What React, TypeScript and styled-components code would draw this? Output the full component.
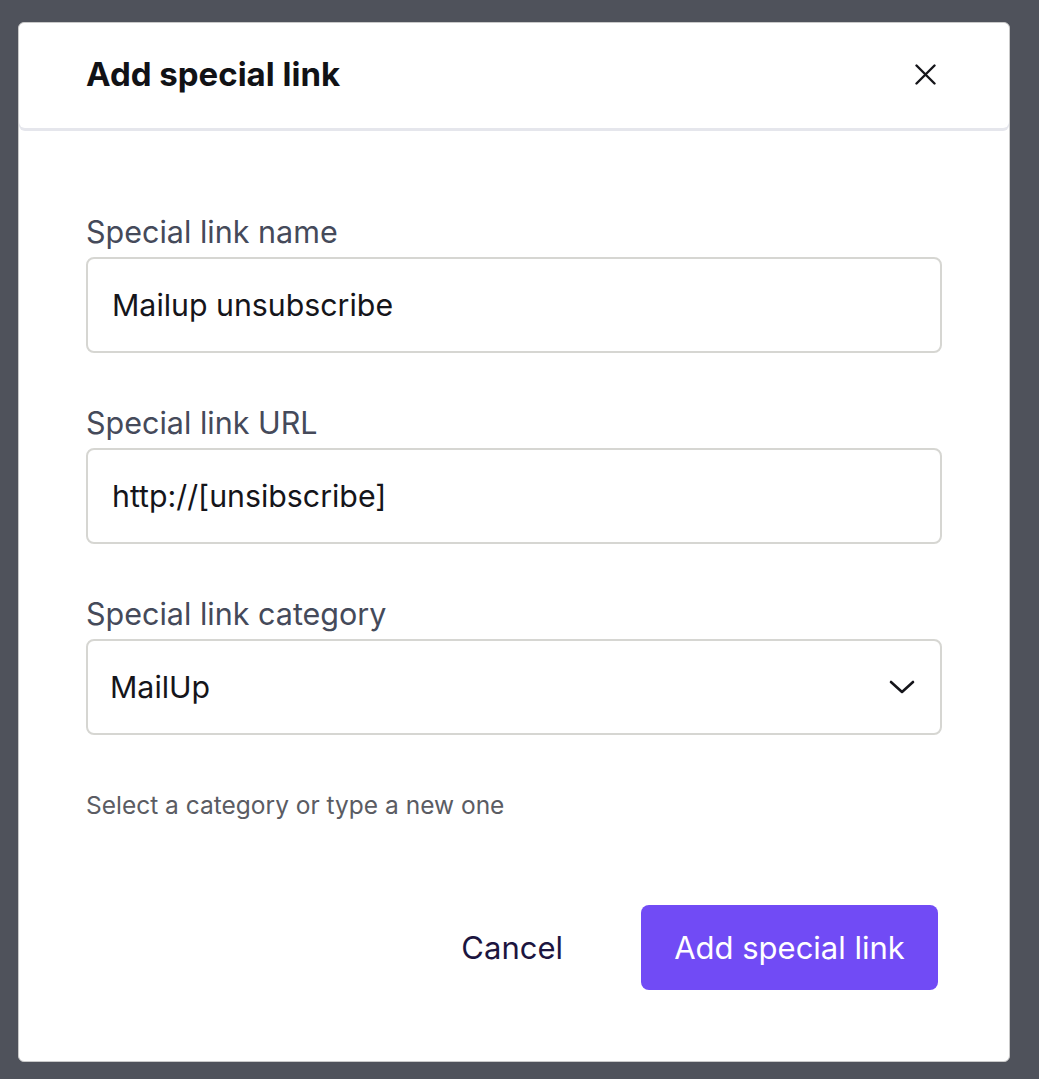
import React from "react";
import styled, { createGlobalStyle } from "styled-components";

const Global = createGlobalStyle`
  html, body { margin: 0; padding: 0; background: #4f525b; }
  body { font-family: Inter, "Noto Sans", sans-serif; -webkit-font-smoothing: antialiased; }
  * { box-sizing: border-box; }
`;

const Page = styled.div`
  padding: 22px 29px 17px 18px;
  min-height: 1079px;
`;

const Modal = styled.div`
  background: #fff;
  border: 1px solid #c9c9c9;
  border-radius: 6px;
  height: 1040px;
  display: flex;
  flex-direction: column;
`;

const Header = styled.div`
  height: 105px;
  display: flex;
  align-items: center;
  justify-content: space-between;
  padding: 0 73px 3px 67px;
  border-radius: 6px;
  box-shadow: 0 3px 0 #e5e6ec;
`;

const Title = styled.h1`
  margin: 0;
  font-size: 33px;
  font-weight: 700;
  color: #111216;
`;

const CloseBtn = styled.button`
  border: 0;
  background: none;
  padding: 0;
  width: 21px;
  height: 21px;
  display: flex;
  align-items: center;
  justify-content: center;
  cursor: pointer;
`;

const Body = styled.div`
  padding: 87px 67px 0 67px;
  display: flex;
  flex-direction: column;
`;

const Field = styled.div<{ $last?: boolean }>`
  display: flex;
  flex-direction: column;
  margin-bottom: ${(p) => (p.$last ? 0 : 53)}px;
`;

const Label = styled.label`
  font-size: 30.5px;
  color: #454a5a;
  line-height: 34px;
  margin-bottom: 8px;
`;

const InputBox = styled.div<{ $pad?: number }>`
  height: 96px;
  border: 2px solid #d6d6d2;
  border-radius: 8px;
  display: flex;
  align-items: center;
  justify-content: space-between;
  padding: 0 25px 0 ${(p) => p.$pad ?? 24}px;
  font-size: 30.3px;
  color: #15151a;
`;

const Helper = styled.p`
  margin: 56px 0 0 0;
  font-size: 24.5px;
  line-height: 29px;
  color: #5b5c63;
`;

const Footer = styled.div`
  display: flex;
  justify-content: flex-end;
  align-items: center;
  gap: 78px;
  padding: 85px 71px 0 0;
`;

const TextButton = styled.button`
  border: 0;
  background: none;
  font-family: inherit;
  font-size: 31px;
  color: #1c1540;
  padding: 0;
  cursor: pointer;
`;

const PrimaryButton = styled.button`
  border: 0;
  background: #714bf5;
  color: #fff;
  font-family: inherit;
  font-size: 31px;
  width: 297px;
  height: 85px;
  border-radius: 8px;
  cursor: pointer;
`;

export default function App() {
  return (
    <>
      <Global />
      <Page>
        <Modal>
          <Header>
            <Title>Add special link</Title>
            <CloseBtn aria-label="Close">
              <svg width="21" height="21" viewBox="0 0 21 21" fill="none">
                <path d="M1.5 1.5L19.5 19.5M19.5 1.5L1.5 19.5" stroke="#15151a" strokeWidth="2.4" strokeLinecap="round" />
              </svg>
            </CloseBtn>
          </Header>
          <Body>
            <Field>
              <Label>Special link name</Label>
              <InputBox>Mailup unsubscribe</InputBox>
            </Field>
            <Field>
              <Label>Special link URL</Label>
              <InputBox>http://[unsibscribe]</InputBox>
            </Field>
            <Field $last>
              <Label>Special link category</Label>
              <InputBox $pad={22}>
                <span>MailUp</span>
                <svg width="26" height="16" viewBox="0 0 26 16" fill="none">
                  <path d="M2 3L13 13L24 3" stroke="#15151a" strokeWidth="2.6" strokeLinecap="round" strokeLinejoin="round" />
                </svg>
              </InputBox>
            </Field>
            <Helper>Select a category or type a new one</Helper>
          </Body>
          <Footer>
            <TextButton>Cancel</TextButton>
            <PrimaryButton>Add special link</PrimaryButton>
          </Footer>
        </Modal>
      </Page>
    </>
  );
}
